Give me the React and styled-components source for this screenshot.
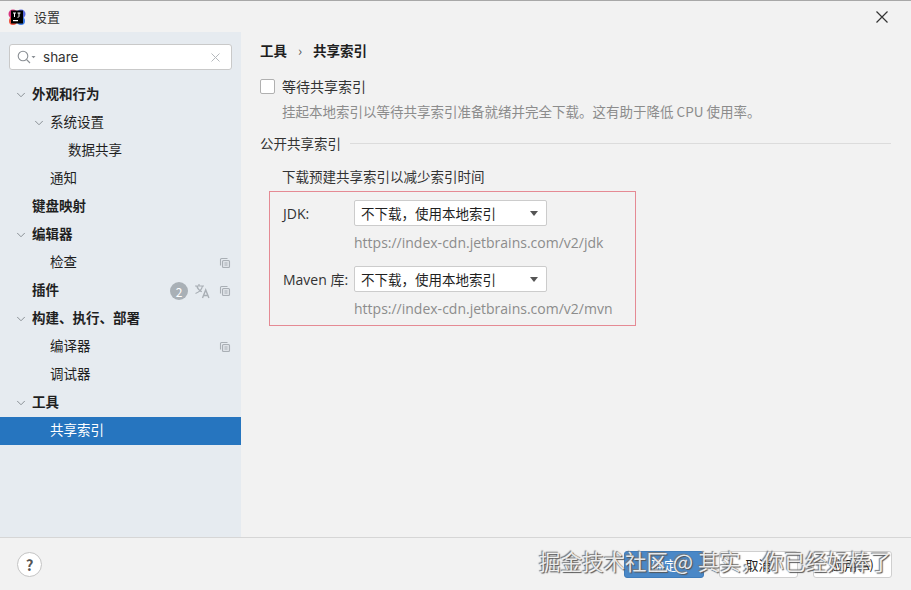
import React from "react";
import styled, { createGlobalStyle } from "styled-components";
import { ChevronDown } from "lucide-react";

const FONT = `"Noto Sans CJK SC", "Noto Sans", sans-serif`;

const tree = [
  { label: "外观和行为", level: 0, bold: true, open: true },
  { label: "系统设置", level: 1, open: true },
  { label: "数据共享", level: 2 },
  { label: "通知", level: 1 },
  { label: "键盘映射", level: 0, bold: true },
  { label: "编辑器", level: 0, bold: true, open: true },
  { label: "检查", level: 1, copy: true },
  { label: "插件", level: 0, bold: true, copy: true, badge: 2 },
  { label: "构建、执行、部署", level: 0, bold: true, open: true },
  { label: "编译器", level: 1, copy: true },
  { label: "调试器", level: 1 },
  { label: "工具", level: 0, bold: true, open: true },
  { label: "共享索引", level: 1, selected: true },
];

const indexes = [
  { label: "JDK:", url: "https://index-cdn.jetbrains.com/v2/jdk" },
  { label: "Maven 库:", url: "https://index-cdn.jetbrains.com/v2/mvn" },
];

function Logo() {
  return (
    <svg width="18" height="18" viewBox="0 0 18 18">
      <circle cx="5" cy="6" r="4.5" fill="#d8337f" />
      <circle cx="13" cy="6" r="4.5" fill="#5a6be0" />
      <circle cx="5" cy="13" r="4" fill="#f0513c" />
      <circle cx="13" cy="13" r="4" fill="#3d7ce8" />
      <rect x="3" y="2.5" width="12" height="13" fill="#000" />
      <rect x="5" y="12" width="5" height="1.2" fill="#fff" />
      <path d="M5 5h3M6.5 5v4M9.5 5h3M11 5v3.5q0 .8-1.5.8" stroke="#fff" strokeWidth="1" fill="none" />
    </svg>
  );
}

function CopyIcon() {
  return (
    <svg width="12" height="12" viewBox="0 0 12 12" fill="none" stroke="#a9afb5" strokeWidth="1.1">
      <path d="M8.5 1.5h-6a1 1 0 0 0-1 1v6" />
      <rect x="3.5" y="3.5" width="7" height="7" rx="1" fill="#dfe3e8" />
      <path d="M5.5 6h3M5.5 8h3" />
    </svg>
  );
}

function TranslateIcon() {
  return (
    <svg width="17" height="16" viewBox="0 0 17 16" fill="none" stroke="#a9afb5" strokeWidth="1.2">
      <path d="M1 3h9M5 1v2M8.5 3c-.6 3-3 6-7 7.5M2.8 3c.7 2.6 2.6 4.6 5 5.8" />
      <path d="M8.5 15l3.2-8 3.2 8M9.8 12.5h3.8" strokeWidth="1.4" />
    </svg>
  );
}

export default function App() {
  return (
    <Dialog>
      <GlobalStyle />
      <TitleBar>
        <Logo />
        <TitleText>设置</TitleText>
        <CloseButton>
          <svg width="12" height="12" viewBox="0 0 12 12" stroke="#333" strokeWidth="1.2">
            <path d="M.5.5l11 11M11.5.5l-11 11" />
          </svg>
        </CloseButton>
      </TitleBar>
      <Body>
        <Sidebar>
          <SearchBox>
            <svg width="19" height="14" viewBox="0 0 19 14" fill="none" stroke="#8a8f94" strokeWidth="1.1">
              <circle cx="6" cy="6" r="4.8" />
              <path d="M9.5 9.5l3.5 3.5" />
              <path d="M14.5 6h4l-2 2.2z" fill="#8a8f94" stroke="none" />
            </svg>
            <SearchText>share</SearchText>
            <svg width="9" height="9" viewBox="0 0 9 9" stroke="#b5b9bd" strokeWidth="1">
              <path d="M.5.5l8 8M8.5.5l-8 8" />
            </svg>
          </SearchBox>
          <Tree>
            {tree.map((item) => (
              <TreeRow key={item.label} $level={item.level} $selected={item.selected}>
                <Arrow>{item.open && <ChevronDown size={14} strokeWidth={1.5} color="#7d8388" />}</Arrow>
                <TreeLabel $bold={item.bold}>{item.label}</TreeLabel>
                {item.badge && <Badge>{item.badge}</Badge>}
                {item.badge && <TranslateIcon />}
                {item.copy && <CopySlot><CopyIcon /></CopySlot>}
              </TreeRow>
            ))}
          </Tree>
        </Sidebar>
        <Content>
          <Breadcrumb>
            <span>工具</span>
            <Crumb>›</Crumb>
            <span>共享索引</span>
          </Breadcrumb>
          <CheckRow>
            <CheckBox />
            <span>等待共享索引</span>
          </CheckRow>
          <Hint>挂起本地索引以等待共享索引准备就绪并完全下载。这有助于降低 CPU 使用率。</Hint>
          <SectionTitle>
            <span>公开共享索引</span>
            <SectionLine />
          </SectionTitle>
          <Lead>下载预建共享索引以减少索引时间</Lead>
          <RedBox>
            {indexes.map((row) => (
              <IndexBlock key={row.label}>
                <IndexRow>
                  <IndexLabel>{row.label}</IndexLabel>
                  <Select>
                    <span>不下载，使用本地索引</span>
                    <Caret />
                  </Select>
                </IndexRow>
                <Url>{row.url}</Url>
              </IndexBlock>
            ))}
          </RedBox>
        </Content>
      </Body>
      <Footer>
        <Help>?</Help>
        <Buttons>
          <Button $primary>确定</Button>
          <Button>取消</Button>
          <Button>应用(A)</Button>
        </Buttons>
        <Watermark>掘金技术社区 @ 其实，你已经好棒了</Watermark>
      </Footer>
    </Dialog>
  );
}

const GlobalStyle = createGlobalStyle`
  html, body {
    margin: 0;
    padding: 0;
  }
  * {
    box-sizing: border-box;
  }
`;

const Dialog = styled.div`
  width: 911px;
  height: 590px;
  display: flex;
  flex-direction: column;
  background-color: #f2f2f2;
  border-top: 1px solid #a8a8a8;
  font-family: ${FONT};
  font-size: 14px;
  color: #1f1f1f;
  overflow: hidden;
`;

const TitleBar = styled.header`
  height: 31px;
  flex-shrink: 0;
  display: flex;
  align-items: center;
  padding: 0 23px 0 8px;
  gap: 8px;
`;

const TitleText = styled.span`
  font-size: 13px;
  color: #333333;
`;

const CloseButton = styled.div`
  margin-left: auto;
  display: flex;
`;

const Body = styled.div`
  flex: 1;
  display: flex;
  min-height: 0;
`;

const Sidebar = styled.aside`
  width: 241px;
  background-color: #e6ebf0;
  padding-top: 12px;
`;

const SearchBox = styled.div`
  width: 223px;
  height: 26px;
  margin-left: 9px;
  display: flex;
  align-items: center;
  padding: 0 11px 0 7px;
  background-color: #ffffff;
  border: 1px solid #c9c9c9;
  border-radius: 3px;
`;

const SearchText = styled.span`
  flex: 1;
  margin-left: 7px;
  font-family: "Inter", sans-serif;
  font-size: 13.5px;
  color: #333333;
`;

const Tree = styled.div`
  margin-top: 11px;
`;

const TreeRow = styled.div`
  height: 28px;
  display: flex;
  align-items: center;
  padding-left: ${({ $level }) => 14 + $level * 18}px;
  padding-right: 10px;
  background-color: ${({ $selected }) => ($selected ? "#2675bf" : "transparent")};
  color: ${({ $selected }) => ($selected ? "#ffffff" : "#1f1f1f")};
`;

const Arrow = styled.span`
  width: 18px;
  height: 14px;
  display: flex;
`;

const TreeLabel = styled.span`
  flex: 1;
  padding-bottom: 4px;
  font-size: 13.5px;
  font-weight: ${({ $bold }) => ($bold ? 700 : 400)};
`;

const Badge = styled.span`
  width: 18px;
  height: 18px;
  margin-right: 6px;
  border-radius: 50%;
  display: flex;
  align-items: center;
  justify-content: center;
  background-color: #a9b0b6;
  color: #ffffff;
  font-size: 12px;
`;

const CopySlot = styled.span`
  display: flex;
  margin-left: 8px;
`;

const Content = styled.main`
  flex: 1;
  padding: 8px 20px 0 19px;
`;

const Breadcrumb = styled.div`
  display: flex;
  align-items: center;
  gap: 11px;
  height: 20px;
  font-size: 13.5px;
  font-weight: 700;
`;

const Crumb = styled.span`
  font-weight: 400;
  color: #555555;
`;

const CheckRow = styled.div`
  display: flex;
  align-items: center;
  gap: 7px;
  margin-top: 16px;
  height: 20px;
  color: #333333;
`;

const CheckBox = styled.span`
  width: 15px;
  height: 15px;
  background-color: #ffffff;
  border: 1px solid #b0b0b0;
  border-radius: 2px;
`;

const Hint = styled.div`
  margin: 5px 0 0 22px;
  height: 20px;
  color: #8c8c8c;
  font-size: 13.5px;
`;

const SectionTitle = styled.div`
  display: flex;
  align-items: center;
  gap: 9px;
  margin-top: 12px;
  height: 20px;
  font-size: 13.5px;
  color: #333333;
`;

const SectionLine = styled.span`
  flex: 1;
  height: 1px;
  background-color: #dcdcdc;
`;

const Lead = styled.div`
  margin: 13px 0 0 22px;
  height: 20px;
  font-size: 13.5px;
  color: #333333;
`;

const RedBox = styled.div`
  width: 367px;
  height: 135px;
  margin: 5px 0 0 9px;
  padding: 8px 0 0 13px;
  border: 1px solid #e58a94;
`;

const IndexBlock = styled.div`
  height: 62px;
  margin-bottom: 4px;
`;

const IndexRow = styled.div`
  display: flex;
  align-items: center;
`;

const IndexLabel = styled.span`
  width: 71px;
  font-family: "Open Sans", "Noto Sans CJK SC", sans-serif;
  font-size: 14px;
  color: #333333;
`;

const Select = styled.div`
  width: 193px;
  height: 26px;
  display: flex;
  align-items: center;
  justify-content: space-between;
  padding: 0 8px 0 6px;
  background-color: #ffffff;
  border: 1px solid #cccccc;
  border-radius: 2px;
  font-size: 13.5px;
`;

const Caret = styled.span`
  width: 0;
  height: 0;
  border-left: 4.5px solid transparent;
  border-right: 4.5px solid transparent;
  border-top: 5px solid #555555;
`;

const Url = styled.div`
  margin: 7px 0 0 71px;
  font-family: "Open Sans", sans-serif;
  font-size: 14px;
  color: #8c8c8c;
`;

const Footer = styled.footer`
  position: relative;
  height: 53px;
  flex-shrink: 0;
  display: flex;
  align-items: center;
  justify-content: space-between;
  padding: 0 19px 0 17px;
  border-top: 1px solid #d6d6d6;
`;

const Help = styled.div`
  width: 25px;
  height: 25px;
  border-radius: 50%;
  display: flex;
  align-items: center;
  justify-content: center;
  background-color: #ffffff;
  border: 1px solid #c4c4c4;
  color: #555555;
  font-size: 15px;
  font-weight: 700;
`;

const Buttons = styled.div`
  display: flex;
  gap: 15px;
`;

const Button = styled.div`
  width: ${({ $primary }) => ($primary ? 80 : 79)}px;
  height: 27px;
  display: flex;
  align-items: center;
  justify-content: center;
  border-radius: 3px;
  font-size: 13px;
  background-color: ${({ $primary }) => ($primary ? "#4a88c7" : "#ffffff")};
  color: ${({ $primary }) => ($primary ? "#ffffff" : "#222222")};
  border: 1px solid ${({ $primary }) => ($primary ? "#3f7cba" : "#cfcfcf")};
`;

const Watermark = styled.div`
  position: absolute;
  left: 539px;
  top: 7px;
  font-size: 21.5px;
  color: rgba(255, 255, 255, 0.85);
  white-space: nowrap;
  text-shadow: 1px 1px 1px #555555, -1px -1px 1px #777777;
`;
